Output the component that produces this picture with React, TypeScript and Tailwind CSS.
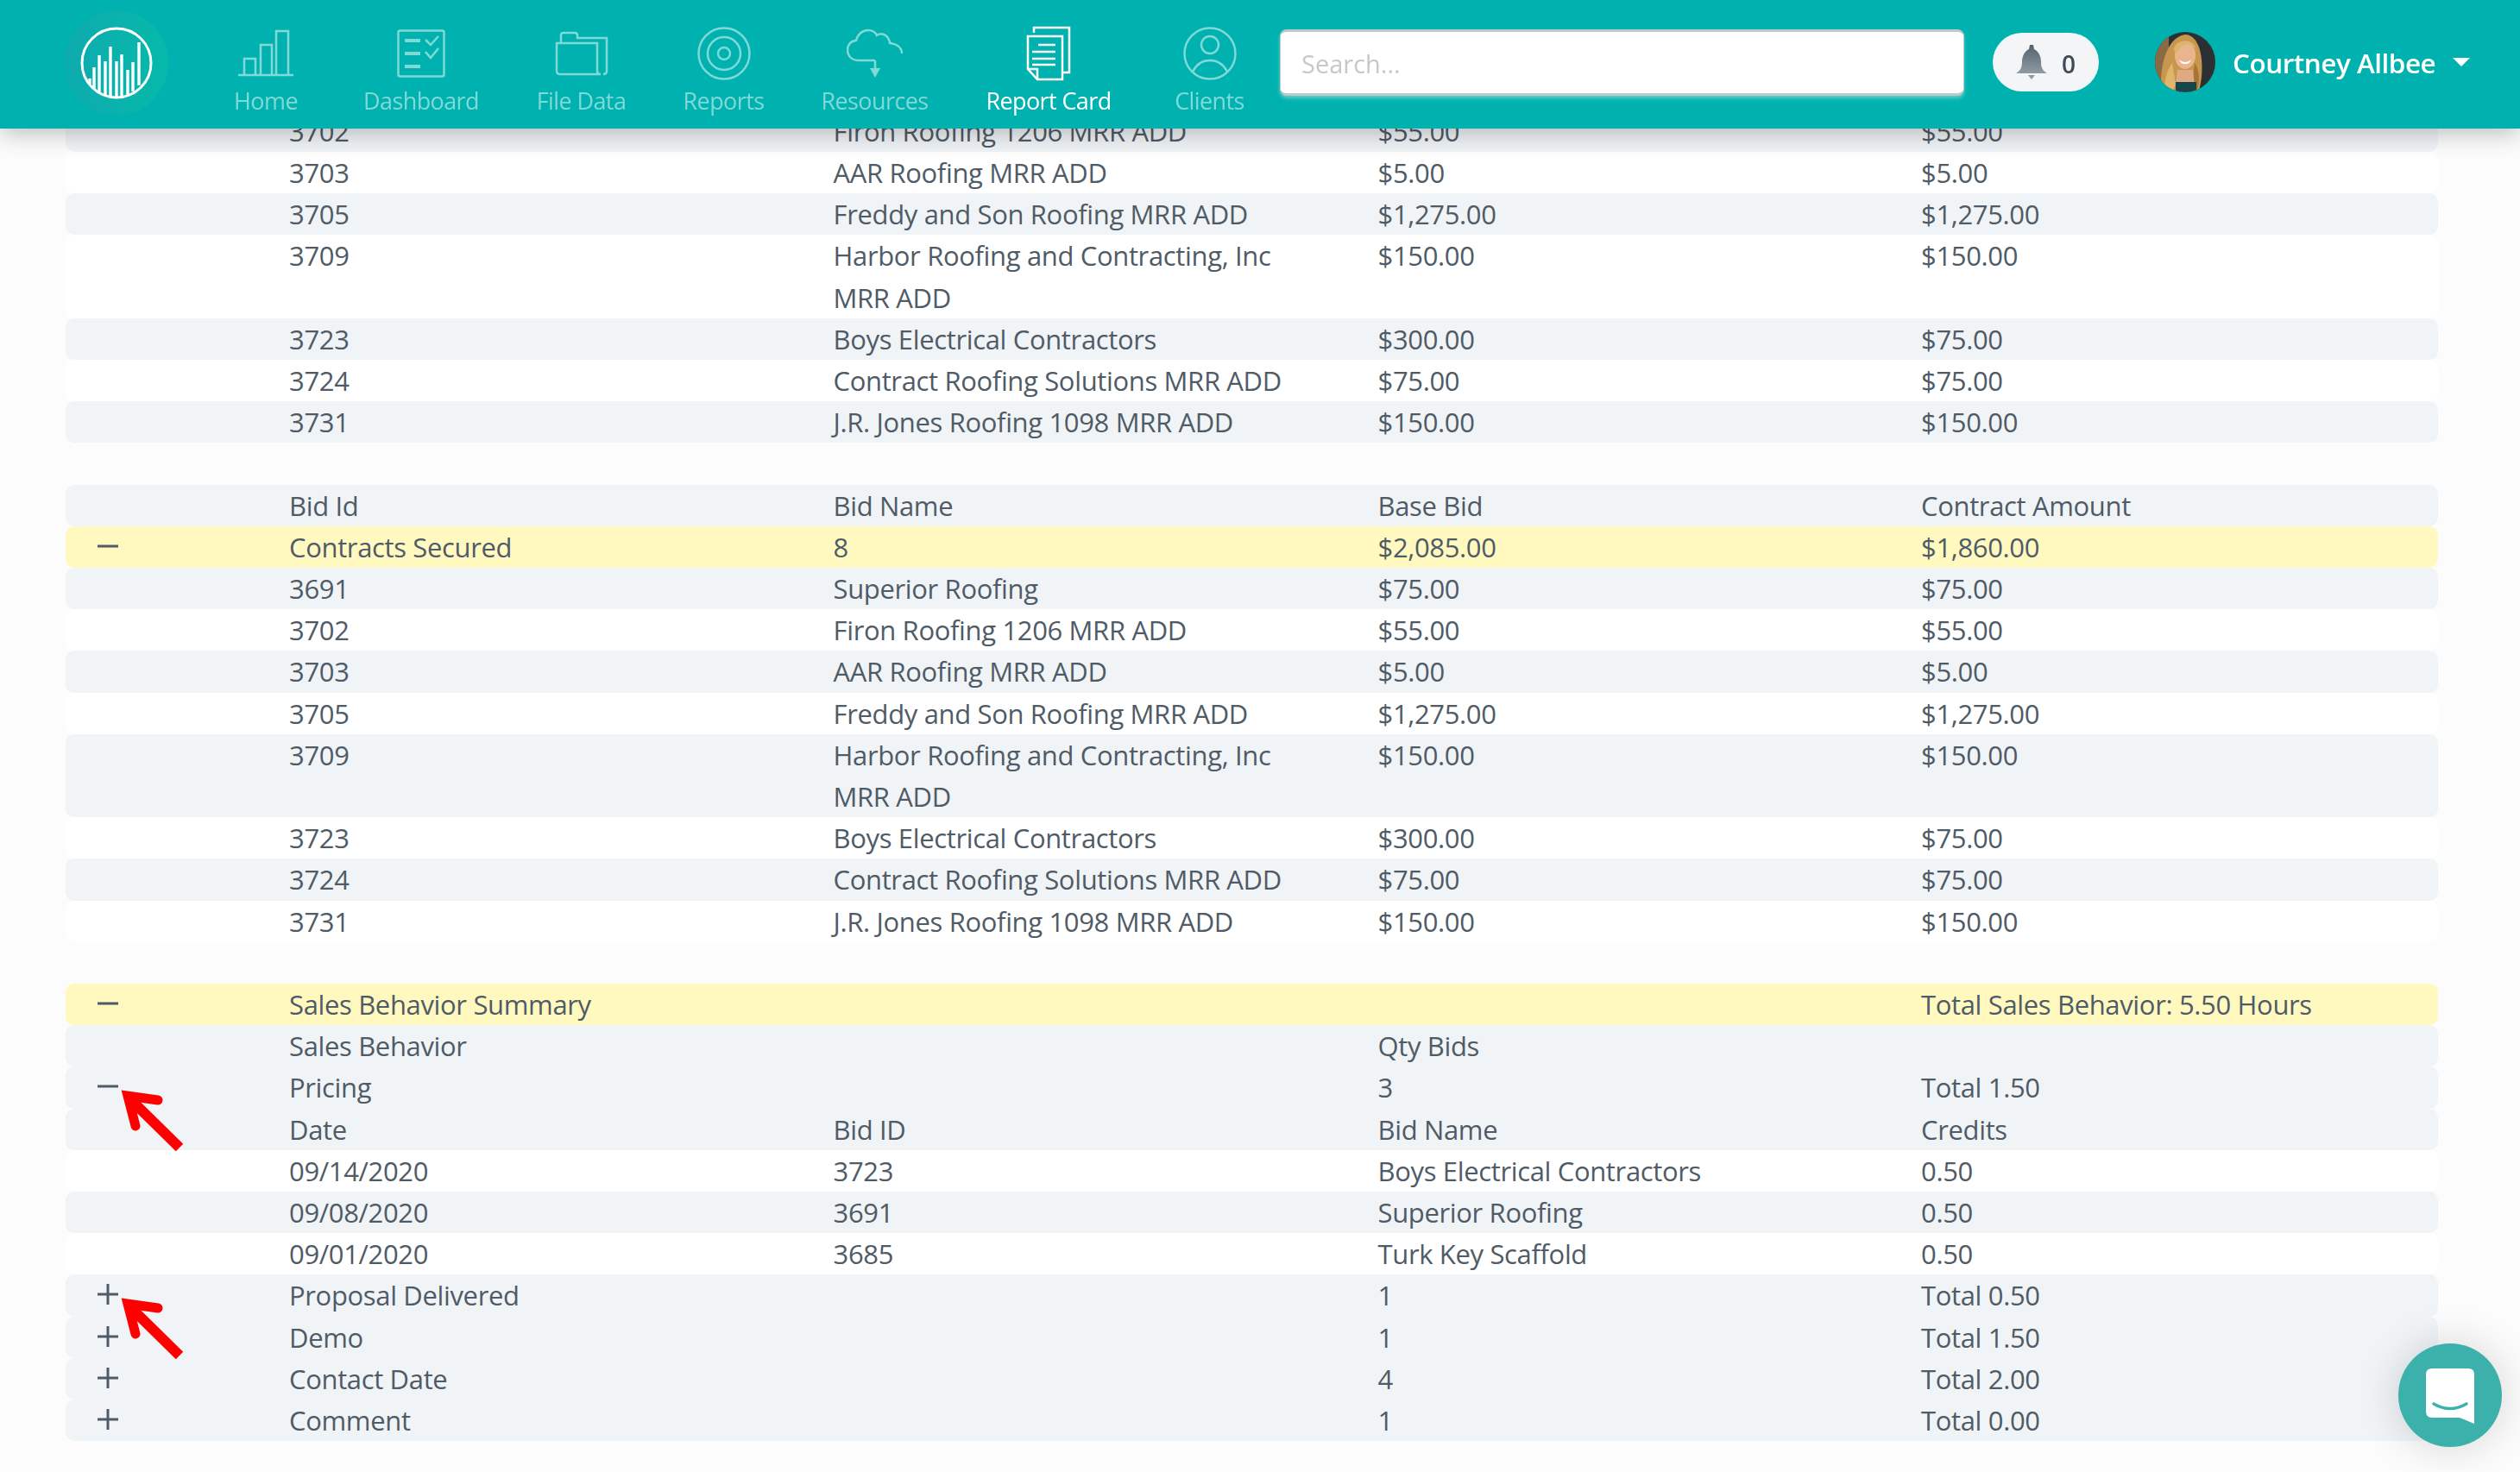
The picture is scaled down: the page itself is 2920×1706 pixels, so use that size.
import React from "react";

type Row = {
  cells: [string, string, string, string];
  tone: "stripe" | "white" | "yellow";
  toggle?: "plus" | "minus";
  arrow?: boolean;
};

const bidRows = (first: "stripe" | "white"): Row[] => {
  const other = first === "stripe" ? "white" : "stripe";
  return [
    { cells: ["3703", "AAR Roofing MRR ADD", "$5.00", "$5.00"], tone: first },
    { cells: ["3705", "Freddy and Son Roofing MRR ADD", "$1,275.00", "$1,275.00"], tone: other },
    { cells: ["3709", "Harbor Roofing and Contracting, Inc MRR ADD", "$150.00", "$150.00"], tone: first },
    { cells: ["3723", "Boys Electrical Contractors", "$300.00", "$75.00"], tone: other },
    { cells: ["3724", "Contract Roofing Solutions MRR ADD", "$75.00", "$75.00"], tone: first },
    { cells: ["3731", "J.R. Jones Roofing 1098 MRR ADD", "$150.00", "$150.00"], tone: other },
  ];
};

const firstBlock: Row[] = [
  { cells: ["3702", "Firon Roofing 1206 MRR ADD", "$55.00", "$55.00"], tone: "stripe" },
  ...bidRows("white"),
];

const secondBlock: Row[] = [
  { cells: ["Bid Id", "Bid Name", "Base Bid", "Contract Amount"], tone: "stripe" },
  { cells: ["Contracts Secured", "8", "$2,085.00", "$1,860.00"], tone: "yellow", toggle: "minus" },
  { cells: ["3691", "Superior Roofing", "$75.00", "$75.00"], tone: "stripe" },
  { cells: ["3702", "Firon Roofing 1206 MRR ADD", "$55.00", "$55.00"], tone: "white" },
  ...bidRows("stripe"),
];

const thirdBlock: Row[] = [
  { cells: ["Sales Behavior Summary", "", "", "Total Sales Behavior: 5.50 Hours"], tone: "yellow", toggle: "minus" },
  { cells: ["Sales Behavior", "", "Qty Bids", ""], tone: "stripe" },
  { cells: ["Pricing", "", "3", "Total 1.50"], tone: "stripe", toggle: "minus", arrow: true },
  { cells: ["Date", "Bid ID", "Bid Name", "Credits"], tone: "stripe" },
  { cells: ["09/14/2020", "3723", "Boys Electrical Contractors", "0.50"], tone: "white" },
  { cells: ["09/08/2020", "3691", "Superior Roofing", "0.50"], tone: "stripe" },
  { cells: ["09/01/2020", "3685", "Turk Key Scaffold", "0.50"], tone: "white" },
  { cells: ["Proposal Delivered", "", "1", "Total 0.50"], tone: "stripe", toggle: "plus", arrow: true },
  { cells: ["Demo", "", "1", "Total 1.50"], tone: "stripe", toggle: "plus" },
  { cells: ["Contact Date", "", "4", "Total 2.00"], tone: "stripe", toggle: "plus" },
  { cells: ["Comment", "", "1", "Total 0.00"], tone: "stripe", toggle: "plus" },
];

const toneClass = {
  stripe: "bg-[#f1f4f7]",
  white: "bg-white",
  yellow: "bg-[#fff9c0]",
};

function Toggle({ kind }: { kind: "plus" | "minus" }) {
  return (
    <svg width="26" height="26" viewBox="0 0 26 26" className="absolute left-[36px] top-[10px]" stroke="#4f5b66" strokeWidth="3">
      <path d="M1 13H25" />
      {kind === "plus" && <path d="M13 1V25" />}
    </svg>
  );
}

function RedArrow() {
  return (
    <svg width="80" height="72" viewBox="0 0 80 72" className="absolute left-[60px] top-[26px] z-10" fill="none">
      <path d="M14 11L72 68" stroke="#fe0000" strokeWidth="12" />
      <path d="M47 13L12 8L21 43" stroke="#fe0000" strokeWidth="11" strokeLinecap="round" strokeLinejoin="miter" />
    </svg>
  );
}

function TableRow({ row }: { row: Row }) {
  return (
    <div className={`relative grid grid-cols-[259px_630.5px_631px_629.5px_1fr] rounded-[10px] leading-[48.2px] ${toneClass[row.tone]}`}>
      {row.toggle && <Toggle kind={row.toggle} />}
      {row.arrow && <RedArrow />}
      <div className="col-start-2 pr-6">{row.cells[0]}</div>
      <div className="pr-[60px]">{row.cells[1]}</div>
      <div className="pr-6">{row.cells[2]}</div>
      <div>{row.cells[3]}</div>
    </div>
  );
}

function NavItem({ label, width, active, children }: { label: string; width: string; active?: boolean; children: React.ReactNode }) {
  return (
    <div className={`flex flex-col items-center ${width} ${active ? "text-white" : "text-[#7fd9d7]"}`}>
      <div className="mt-[30px] flex h-[64px] items-center justify-center">{children}</div>
      <div className="text-[27px] leading-[46px] tracking-[-0.6px]">{label}</div>
    </div>
  );
}

function Logo() {
  return (
    <div className="mt-[12px] flex h-[121px] w-[120px] items-center justify-center rounded-full bg-gradient-to-r from-[#0eabae] to-[#06b9aa]">
      <svg width="84" height="84" viewBox="0 0 84 84" fill="none" stroke="white">
        <circle cx="42" cy="42" r="40" strokeWidth="3" />
        <g strokeWidth="3.4">
          <path d="M11 60V66" />
          <path d="M16 47V72" />
          <path d="M22 33V77" />
          <path d="M29 40V80" />
          <path d="M35 23V81" />
          <path d="M42 40V81" />
          <path d="M48 32V81" />
          <path d="M55 50V79" />
          <path d="M61 41V75" />
          <path d="M68 18V68" />
        </g>
      </svg>
    </div>
  );
}

function Avatar() {
  return (
    <svg width="70" height="70" viewBox="0 0 70 70" className="rounded-full">
      <rect width="70" height="70" fill="#2b3034" />
      <rect width="16" height="70" fill="#8a6a45" />
      <path d="M8 70C4 46 12 6 35 3C52 4 56 30 54 52C53 60 52 66 50 70Z" fill="#c7964f" />
      <path d="M12 70C10 56 14 44 20 36L24 60L20 70Z" fill="#e0b56c" />
      <path d="M46 36C52 44 52 60 48 70H42Z" fill="#a87435" />
      <ellipse cx="35" cy="27" rx="12" ry="16" fill="#eab48d" />
      <path d="M28 32C32 36 38 36 42 32C40 39 30 39 28 32Z" fill="white" />
      <path d="M26 44H44L46 62H24Z" fill="#dfa981" />
      <path d="M24 58H48V70H24Z" fill="#13464d" />
      <path d="M22 20C24 8 44 6 48 20C40 12 32 12 24 26Z" fill="#dcb46c" />
    </svg>
  );
}

function Header() {
  return (
    <header className="fixed left-0 right-0 top-0 z-20 flex h-[148.5px] bg-[#00b2af] pl-[75px] shadow-[0_4px_28px_rgba(0,0,0,0.28)]">
      <Logo />
      <div className="ml-[38px] flex">
        <NavItem label="Home" width="w-[150px]">
          <svg width="64" height="56" viewBox="0 0 64 56" fill="none" stroke="currentColor" strokeWidth="2.5">
            <path d="M0 53H64M7 53V34H20V53M26 53V18H39V53M44 53V2H58V53" />
          </svg>
        </NavItem>
        <NavItem label="Dashboard" width="w-[210px]">
          <svg width="56" height="56" viewBox="0 0 56 56" fill="none" stroke="currentColor" strokeWidth="2.5">
            <rect x="1.5" y="1.5" width="53" height="53" rx="2" />
            <path d="M9 13H27M9 28H27M9 43H27" strokeWidth="4" />
            <path d="M33 12L39 18L48 8M33 26L39 33L48 22" />
          </svg>
        </NavItem>
        <NavItem label="File Data" width="w-[161px]">
          <svg width="62" height="52" viewBox="0 0 62 52" fill="none" stroke="currentColor" strokeWidth="2.5">
            <path d="M7 13V5Q7 2 10 2H23Q26 2 26 5V8H60V46Q60 50 56 50" />
            <path d="M2 14H49V46Q49 50 53 50H6Q2 50 2 46Z" />
          </svg>
        </NavItem>
        <NavItem label="Reports" width="w-[169px]">
          <svg width="62" height="62" viewBox="0 0 62 62" fill="none" stroke="currentColor" strokeWidth="2.5">
            <circle cx="31" cy="31" r="29.5" />
            <circle cx="31" cy="31" r="19" />
            <circle cx="31" cy="31" r="7" />
          </svg>
        </NavItem>
        <NavItem label="Resources" width="w-[181px]">
          <svg width="66" height="58" viewBox="0 0 66 58" fill="none" stroke="currentColor" strokeWidth="2.5">
            <path d="M33 37H14C5 37 1 31 1 25C1 18 6 14 11 14C13 6 19 2 25 2C30 2 33 4 35 8C39 5 46 6 49 13C50 15 50 16 50 17C58 18 64 22 64 29" />
            <path d="M33 37V48" />
            <path d="M27 46H39L33 57Z" fill="currentColor" stroke="none" />
          </svg>
        </NavItem>
        <NavItem label="Report Card" width="w-[222px]" active>
          <svg width="52" height="64" viewBox="0 0 52 64" fill="none" stroke="currentColor" strokeWidth="2.5">
            <path d="M9 8V2H50V54H42" />
            <path d="M2 12H42V62H13L2 50Z" />
            <path d="M2 50H13V62" />
            <path d="M14 22H34M7 30H34M7 38H34M7 45H34" />
          </svg>
        </NavItem>
        <NavItem label="Clients" width="w-[151px]">
          <svg width="62" height="62" viewBox="0 0 62 62" fill="none" stroke="currentColor" strokeWidth="2.5">
            <circle cx="31" cy="31" r="29.5" />
            <circle cx="31" cy="21" r="10" />
            <path d="M11 52C16 42 24 39 31 39C38 39 46 42 51 52" />
          </svg>
        </NavItem>
      </div>
      <div className="ml-[6px] mt-[34px] flex h-[77px] w-[793px] items-center rounded-[8px] border-x border-y-[3px] border-[#bfc7c9] bg-white pl-[24px] pt-[3px] text-[29px] text-[#c8c8c8] shadow-[0_3px_4px_rgba(255,255,255,0.35)]">
        Search...
      </div>
      <div className="ml-[33px] mt-[38px] flex h-[68px] w-[123px] items-center rounded-full bg-[#f3f5f7] pl-[27px]">
        <svg width="36" height="40" viewBox="0 0 36 40">
          <defs>
            <linearGradient id="bell" x1="0" y1="0" x2="0" y2="1">
              <stop offset="0" stopColor="#55626c" />
              <stop offset="1" stopColor="#8f9ba3" />
            </linearGradient>
          </defs>
          <path d="M16 0H20L21 5C27 8 29 14 29 20C29 26 31 30 36 33H0C5 30 7 26 7 20C7 14 9 8 15 5Z" fill="url(#bell)" />
          <path d="M14 35H22L18 40Z" fill="#8f9ba3" />
        </svg>
        <span className="ml-[17px] mt-[3px] text-[28px] font-semibold text-[#3f4a54]">0</span>
      </div>
      <div className="ml-[65px] mt-[37px] flex h-[70px] items-center">
        <Avatar />
        <span className="ml-[20px] mt-[2px] text-[31.5px] font-semibold tracking-[-0.5px] text-white">Courtney Allbee</span>
        <span className="ml-[20px] h-0 w-0 border-x-[10px] border-t-[10px] border-x-transparent border-t-white" />
      </div>
    </header>
  );
}

function ChatButton() {
  return (
    <div className="fixed bottom-[29px] right-[21px] z-30 flex h-[120px] w-[120px] items-center justify-center rounded-full bg-[#3cb0aa] shadow-[0_0_50px_rgba(0,0,0,0.16)]">
      <svg width="56" height="64" viewBox="0 0 56 64" className="mt-[2px]">
        <path d="M7 0H49Q56 0 56 7V64L39 57H7Q0 57 0 50V7Q0 0 7 0Z" fill="white" />
        <path d="M9 41Q28 52 47 41" fill="none" stroke="#3cb0aa" strokeWidth="3.5" strokeLinecap="round" />
      </svg>
    </div>
  );
}

export default function App() {
  return (
    <div className="h-screen overflow-hidden bg-[#fcfcfc] font-['Open_Sans',sans-serif] text-[#4f5b66]">
      <Header />
      <div className="pl-[76px] pr-[95px] pt-[127.8px] text-[31px] tracking-[-0.35px]">
        {firstBlock.map((r, i) => (
          <TableRow key={i} row={r} />
        ))}
        <div className="h-[48.2px]" />
        {secondBlock.map((r, i) => (
          <TableRow key={i} row={r} />
        ))}
        <div className="h-[48.2px]" />
        {thirdBlock.map((r, i) => (
          <TableRow key={i} row={r} />
        ))}
      </div>
      <ChatButton />
    </div>
  );
}
